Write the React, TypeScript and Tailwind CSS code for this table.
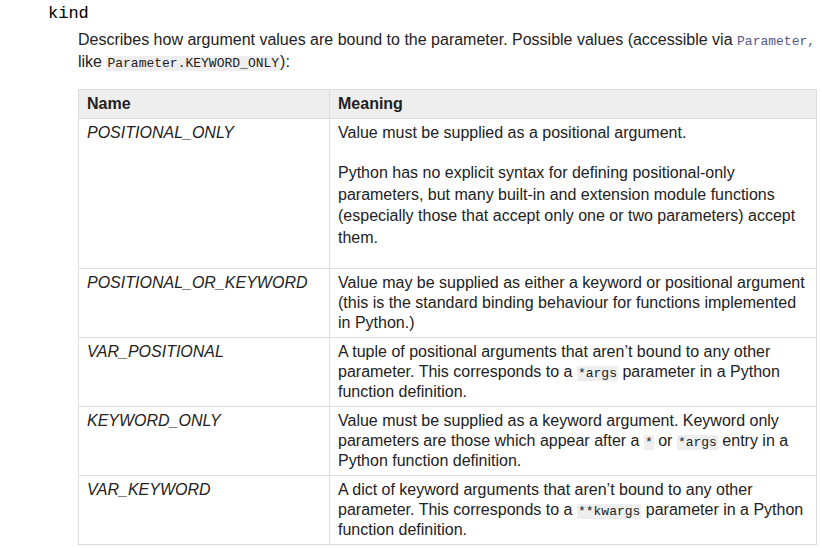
import React from "react";

const Code = ({ children }: { children: React.ReactNode }) => (
  <code className="font-['Liberation_Mono',monospace] text-[13px] leading-none bg-[#eeeeee] px-[1px]">{children}</code>
);

const cell = "border border-[#dddddd] px-2 pt-[4px] pb-[4px] align-top whitespace-nowrap leading-[20px] text-left";

export default function App() {
  return (
    <div className="w-[822px] h-[548px] overflow-hidden bg-white text-[#222222] font-['Liberation_Sans',Arial,sans-serif] text-[16px]">
      <div className="pl-[48px] h-[27px] leading-[27px] font-['Liberation_Mono',monospace] text-[17px] text-black">kind</div>
      <div className="ml-[78px] mt-[2px] leading-[22px] whitespace-nowrap">
        <div className="h-[22px]">
          Describes how argument values are bound to the parameter. Possible values (accessible via{" "}
          <span className="font-['Liberation_Mono',monospace] text-[13px] leading-none text-[#56568f]">Parameter,</span>
        </div>
        <div className="h-[22px]">
          like <Code>Parameter.KEYWORD_ONLY</Code>):
        </div>
      </div>
      <table className="ml-[78px] mt-[16px] w-[739px] border-collapse border border-[#dddddd]">
        <thead>
          <tr className="bg-[#eeeeee]">
            <th className={`${cell} w-[251px] font-bold`}>Name</th>
            <th className={`${cell} font-bold`}>Meaning</th>
          </tr>
        </thead>
        <tbody>
          <tr>
            <td className={`${cell} italic`}>POSITIONAL_ONLY</td>
            <td className={cell}>
              <p>Value must be supplied as a positional argument.</p>
              <p className="mt-[19px] mb-[16px] leading-[21.6px]">
                Python has no explicit syntax for defining positional-only
                <br />
                parameters, but many built-in and extension module functions
                <br />
                (especially those that accept only one or two parameters) accept
                <br />
                them.
              </p>
            </td>
          </tr>
          <tr>
            <td className={`${cell} italic`}>POSITIONAL_OR_KEYWORD</td>
            <td className={cell}>
              Value may be supplied as either a keyword or positional argument
              <br />
              (this is the standard binding behaviour for functions implemented
              <br />
              in Python.)
            </td>
          </tr>
          <tr>
            <td className={`${cell} italic`}>VAR_POSITIONAL</td>
            <td className={cell}>
              A tuple of positional arguments that aren’t bound to any other
              <br />
              parameter. This corresponds to a <Code>*args</Code> parameter in a Python
              <br />
              function definition.
            </td>
          </tr>
          <tr>
            <td className={`${cell} italic`}>KEYWORD_ONLY</td>
            <td className={cell}>
              Value must be supplied as a keyword argument. Keyword only
              <br />
              parameters are those which appear after a <Code>*</Code> or <Code>*args</Code> entry in a
              <br />
              Python function definition.
            </td>
          </tr>
          <tr>
            <td className={`${cell} italic`}>VAR_KEYWORD</td>
            <td className={cell}>
              A dict of keyword arguments that aren’t bound to any other
              <br />
              parameter. This corresponds to a <Code>**kwargs</Code> parameter in a Python
              <br />
              function definition.
            </td>
          </tr>
        </tbody>
      </table>
    </div>
  );
}
